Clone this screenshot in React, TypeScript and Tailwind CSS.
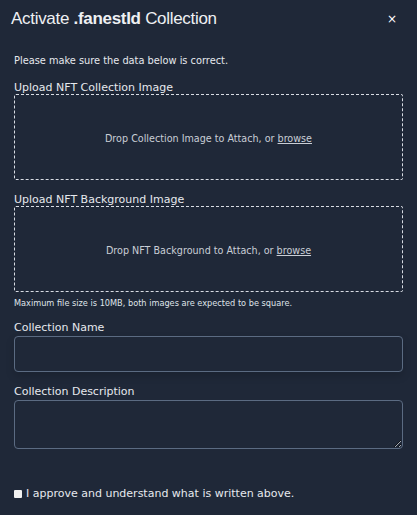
import React from "react";

const body = { fontFamily: '"DejaVu Sans", Verdana, sans-serif' };

function DropZone({ label }: { label: string }) {
  return (
    <div className="flex h-[86px] items-center justify-center rounded-[2px] border border-dashed border-[#d8dce3] pt-[4px]">
      <p className="text-[9.6px] text-[#c9ced6]" style={body}>
        Drop {label} to Attach, or{" "}
        <span className="underline underline-offset-1">browse</span>
      </p>
    </div>
  );
}

export default function App() {
  return (
    <div
      className="h-[515px] w-[417px] bg-[#1f2838] text-[#e6e9ee]"
      style={body}
    >
      <div className="flex items-center justify-between pl-[11px] pr-[20px] pt-[7px]">
        <h1
          className="text-[17px] leading-[24px] tracking-[-0.3px] text-[#eef0f3]"
          style={{ fontFamily: '"Liberation Sans", Arial, sans-serif' }}
        >
          Activate <span className="font-bold">.fanestId</span> Collection
        </h1>
        <span className="text-[12px] leading-none text-white">×</span>
      </div>

      <div className="px-[14px] pt-[24px]">
        <p className="text-[9.8px] leading-[12px] text-[#e6e9ee]">
          Please make sure the data below is correct.
        </p>

        <p className="mt-[14px] text-[11px] leading-[13px]">
          Upload NFT Collection Image
        </p>
        <DropZone label="Collection Image" />

        <p className="mt-[13px] text-[11px] leading-[13px]">
          Upload NFT Background Image
        </p>
        <DropZone label="NFT Background" />

        <p className="mt-[6px] text-[8.2px] leading-[10px] text-[#dfe3e9]">
          Maximum file size is 10MB, both images are expected to be square.
        </p>

        <p className="mt-[13px] text-[11px] leading-[14px]">Collection Name</p>
        <input
          type="text"
          className="mt-[1px] block h-[36px] w-full rounded-[4px] border border-[#5b6b82] bg-transparent px-2 text-[12px] text-white outline-none shadow-[0_4px_8px_rgba(0,0,0,0.15)]"
        />

        <p className="mt-[13px] text-[11px] leading-[14px]">
          Collection Description
        </p>
        <textarea className="mt-[1px] block h-[49px] w-full rounded-[4px] border border-[#5b6b82] bg-transparent px-2 text-[12px] text-white outline-none" />

        <label className="mt-[38px] flex items-center gap-[4px] text-[11px] leading-[14px]">
          <input
            type="checkbox"
            className="h-[8px] w-[8px] appearance-none rounded-[1px] bg-[#f1f1f1]"
          />
          I approve and understand what is written above.
        </label>
      </div>
    </div>
  );
}
